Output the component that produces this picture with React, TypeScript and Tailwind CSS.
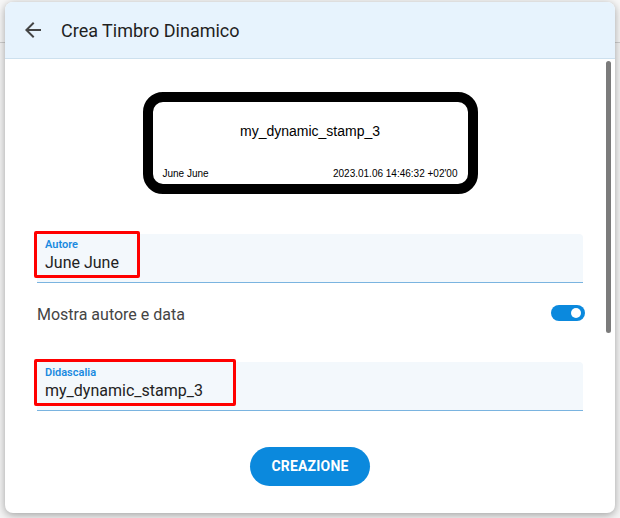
import React from "react";

function Field({ label, value, boxW }: { label: string; value: string; boxW: string }) {
  return (
    <div className="relative h-[49px] rounded-t-[4px] bg-[#f3f8fc] border-b border-[#7ab4e0] pl-2 pt-[3px]">
      <div className="text-[11px] font-semibold leading-[15px] text-[#1a8ae0]">{label}</div>
      <div className="text-[16px] leading-[22px] text-[#222]">{value}</div>
      <div className={`absolute -left-[3px] -top-[3px] h-[47px] border-[3px] border-[#ff0000] rounded-[2px] ${boxW}`} />
    </div>
  );
}

export default function App() {
  return (
    <main
      className="relative w-[620px] h-[518px] overflow-hidden bg-[#f4f4f4]"
      style={{ fontFamily: "Roboto, 'Noto Sans', sans-serif" }}
    >
      <div className="h-[43px] border-b border-[#cfcfcf] bg-[#f7f7f7]" />

      <div className="absolute left-[5px] top-[2px] w-[610px] h-[511px] rounded-lg bg-white shadow-[0_2px_8px_rgba(0,0,0,0.35)] flex flex-col">
        <header className="h-[57px] shrink-0 flex items-center gap-[16px] px-[16px] rounded-t-lg bg-[#e7f3fd] border-b border-[#cde0ee]">
          <svg width="24" height="24" viewBox="0 0 24 24" className="text-[#444]">
            <path d="M20 11H7.83l5.59-5.59L12 4l-8 8 8 8 1.41-1.41L7.83 13H20v-2z" fill="currentColor" />
          </svg>
          <h1 className="text-[18px] text-[#1f1f1f]">Crea Timbro Dinamico</h1>
        </header>

        <section className="relative flex-1 px-[32px]">
          <div className="absolute right-[4px] top-[2px] w-[5px] h-[272px] rounded-full bg-[#7b7b7b]" />

          <div className="flex justify-center pt-[33px]">
            <div
              className="w-[335px] h-[102px] rounded-[20px] border-[10px] border-black flex flex-col px-[10px] pb-[4px]"
              style={{ fontFamily: "'Liberation Sans', Arial, sans-serif" }}
            >
              <div className="flex-1 flex items-center justify-center text-[14px] text-black pb-[8px]">
                my_dynamic_stamp_3
              </div>
              <div className="flex justify-between text-[10px] text-black leading-[12px]">
                <span>June June</span>
                <span>2023.01.06 14:46:32 +02'00</span>
              </div>
            </div>
          </div>

          <div className="mt-[40px]">
            <Field label="Autore" value="June June" boxW="w-[106px]" />
          </div>

          <div className="h-[60px] pt-[4px] flex items-center justify-between">
            <span className="text-[16px] text-[#444]">Mostra autore e data</span>
            <div className="w-[34px] h-[16px] -mt-[5px] rounded-full bg-[#0b89dd] flex items-center justify-end pr-[4px] -mr-[2px]">
              <div className="w-[10px] h-[10px] rounded-full bg-white" />
            </div>
          </div>

          <div className="mt-[19px]">
            <Field label="Didascalia" value="my_dynamic_stamp_3" boxW="w-[202px]" />
          </div>

          <div className="flex justify-center mt-[36px]">
            <button className="w-[120px] h-[39px] rounded-full bg-[#0b89dd] text-white text-[14px] font-bold tracking-[0.2px]">
              CREAZIONE
            </button>
          </div>
        </section>
      </div>
    </main>
  );
}
